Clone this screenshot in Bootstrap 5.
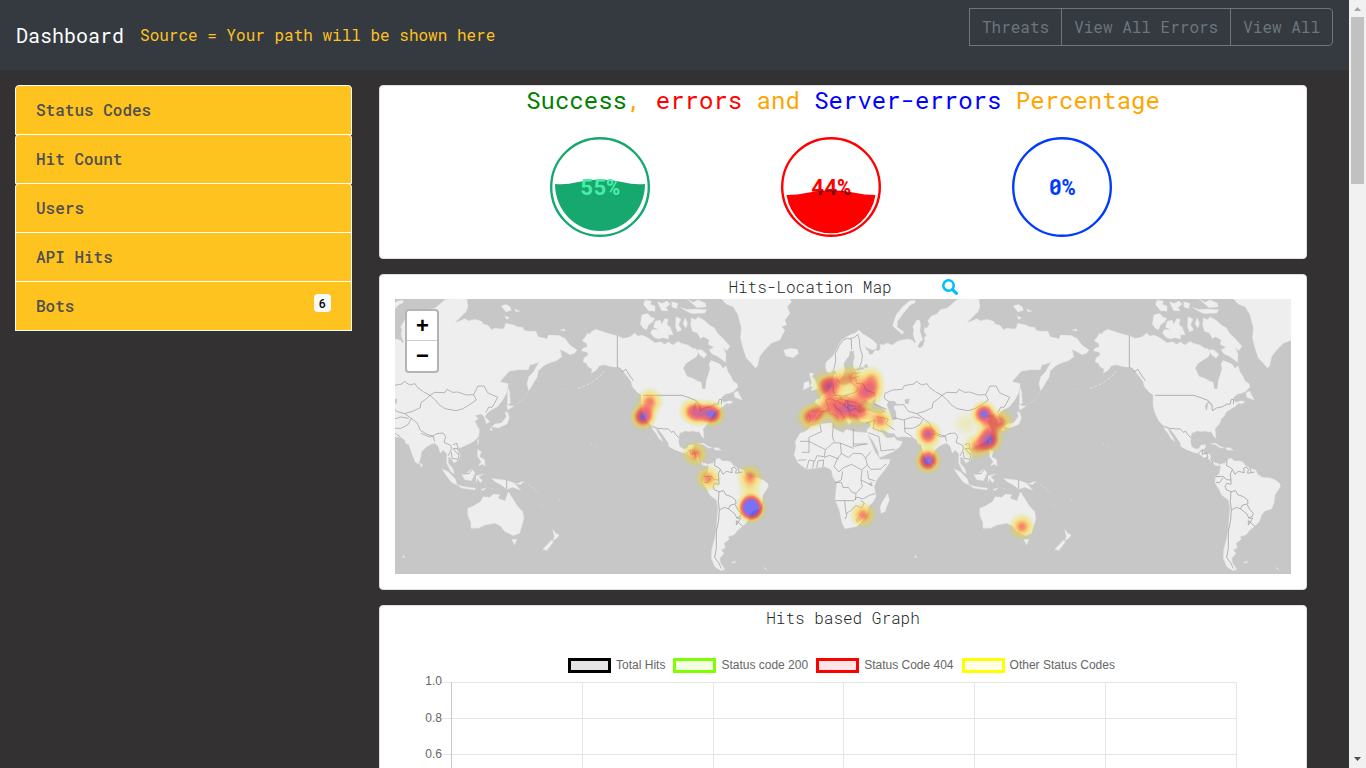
<!DOCTYPE html>
<html lang="en">
<head>
<meta charset="utf-8">
<meta name="viewport" content="width=device-width, initial-scale=1">
<title>Dashboard</title>
<link href="https://cdn.jsdelivr.net/npm/bootstrap@5.3.0/dist/css/bootstrap.min.css" rel="stylesheet">
<style>
body{height:768px;overflow:hidden;background:#343132;font-family:"Roboto Mono","Liberation Mono",monospace;color:#212529}
.topbar{height:70px;background:#343a40}
.navbar-brand{font-size:20px;line-height:30px}
.source{color:#ffc220;font-weight:450}
.topbar .btn{color:#6c757d;border-color:#6c757d;height:38px;line-height:24px;--bs-btn-border-radius:4px}
.topbar .btn:first-child{border-radius:0}
.sidebar{width:337px;margin-left:15px;margin-right:27px}
.sidebar .list-group-item{height:50px;margin-top:-1px;padding:12px 20px;background:#ffc31f;border:1px solid #fff;color:#4f4f4f;font-weight:500}
.sidebar .list-group-item:first-child{margin-top:0}
.sidebar .soft{border-radius:4px 4px 0 0}
.sidebar .badge{font-size:12px;line-height:12px;padding:3px 5px;height:18px;border-radius:4px;font-weight:500}
.main-col{width:928px;gap:15px}
.panel{border:1px solid #dfdfdf;border-radius:4px;background:#fff}
.panel-gauges{height:174px}.panel-map{height:316px}.panel-chart{height:400px}
.gauge-title{font-size:24px;line-height:29px;color:orange;margin:0;font-weight:380}
.gauges{padding:22px 0 0 115px}
.gauges>div{width:231px}
.gauges text{font-size:22px;font-weight:700}
.caption{font-size:16px;line-height:24px;font-weight:350}
.find{margin-left:50px}
.map-box{width:896px;height:275px;margin:0 15px}
.zoomer{left:10px;top:10px;width:34px;height:64px;border:2px solid #b4b4b4;border-radius:4px;background:#fff;overflow:hidden}
.zoomer span{height:29px;font:bold 22px/30px "Liberation Sans",sans-serif;color:#000;text-align:center;padding-left:1px}
.zoomer span+span{border-top:1px solid #ccc;height:31px}
.key{font:12px/14px "Liberation Sans",sans-serif;color:#666;gap:8px;margin-top:28px;height:15px;padding-right:3px}
.key i{width:43px;height:15px;border:3px solid;margin-right:5px}
.chart text{font:12px "Liberation Sans",sans-serif;fill:#666}
.scroller{width:17px;background:#f1f1f1}
.thumb{width:13px;height:167px;background:#c1c1c1}
</style>
</head>
<body class="d-flex">
<div class="flex-grow-1 d-flex flex-column overflow-hidden">
  <nav class="topbar navbar navbar-dark p-0 px-3 flex-shrink-0 align-items-start flex-nowrap">
    <div class="d-flex align-items-center h-100">
      <a class="navbar-brand p-0 text-white" href="#">Dashboard</a>
      <span class="source">Source = Your path will be shown here</span>
    </div>
    <div class="btn-group mt-2">
      <button class="btn btn-outline-secondary">Threats</button>
      <button class="btn btn-outline-secondary">View All Errors</button>
      <button class="btn btn-outline-secondary">View All</button>
    </div>
  </nav>
  <div class="d-flex align-items-start pt-3" style="margin-top:-1px">
    <div class="sidebar flex-shrink-0 list-group rounded-0">
      <a class="list-group-item soft">Status Codes</a>
      <a class="list-group-item soft">Hit Count</a>
      <a class="list-group-item soft">Users</a>
      <a class="list-group-item">API Hits</a>
      <a class="list-group-item d-flex justify-content-between">Bots <span class="badge text-bg-light">6</span></a>
    </div>
    <main class="main-col d-flex flex-column flex-shrink-0">
      <section class="panel panel-gauges">
        <h4 class="gauge-title text-center"><span style="color:green">Success</span>, <span style="color:red">errors</span> and <span style="color:blue">Server-errors</span> Percentage</h4>
        <div class="gauges d-flex">
          <div class="text-center"><svg class="d-block" style="margin-left:55px" width="100" height="100"><circle cx="50" cy="50" r="48.8" fill="none" stroke="#17a86f" stroke-width="2.4"/><path d="M5 47Q16 48 28 45Q50 40 72 45Q84 48 95 47A45 47 0 0 1 5 47Z" fill="#17a86f"/><text x="50" y="58" text-anchor="middle" fill="#49eda9">55%</text></svg></div>
          <div class="text-center"><svg class="d-block" style="margin-left:55px" width="100" height="100"><clipPath id="wet"><path d="M5.500 58Q16 58 28 55.500Q50 51 72 55.500Q84 58 94.500 58A45 45 0 0 1 5.500 58Z"/></clipPath><circle cx="50" cy="50" r="48.8" fill="none" stroke="red" stroke-width="2.4"/><text x="50" y="58" text-anchor="middle" fill="red">44%</text><g clip-path="url(#wet)"><path d="M0 0H100V100H0Z" fill="red"/><text x="50" y="58" text-anchor="middle" fill="#701515">44%</text></g></svg></div>
          <div class="text-center"><svg class="d-block" style="margin-left:55px" width="100" height="100"><circle cx="50" cy="50" r="48.8" fill="none" stroke="#003cff" stroke-width="2.4"/><text x="50" y="58" text-anchor="middle" fill="#003cff">0%</text></svg></div>
        </div>
      </section>
      <section class="panel panel-map">
        <div class="caption d-flex justify-content-center align-items-center"><span>Hits-Location Map</span><svg class="find" width="16" height="16" viewBox="0 0 16 16" fill="none" stroke="#00bfff"><circle cx="6.500" cy="6.500" r="5.2" stroke-width="2.6"/><path d="m10.600 10.600 3.800 3.800" stroke-width="3.100" stroke-linecap="round"/></svg></div>
        <div class="map-box position-relative">
          <svg class="d-block" width="896" height="275" viewBox="395 299 896 275">
            <defs>
              <g id="americas" transform="translate(595 295) scale(.33333)">
                <g fill="#eee" stroke="#e2e2e2" stroke-width="1">
                <path d="M67 122 39 115 19 108 2 103-11 110-16 117-23 115-29 125-39 138-26 145-23 155-36 160-41 168-23 172-21 180-33 188-36 200-26 205-21 215-9 222-11 235 4 225 14 212 29 210 49 215 67 217 85 230 100 248 108 260 112 275 125 290 138 300 138 330 142 350 155 378 170 392 174 405 185 418 191 430 203 441 199 430 188 412 182 400 192 405 210 430 220 445 222 455 240 465 262 473 275 475 290 488 305 492 315 503 325 511 337 514 336 507 331 505 319 502 312 490 309 478 291 475 287 465 294 460 297 449 281 450 277 460 267 462 254 455 251 440 252 425 254 415 271 408 282 410 294 408 303 411 312 410 321 425 327 430 326 412 324 402 339 385 344 370 351 365 359 350 372 342 384 335 394 325 405 327 414 320 404 317 387 322 382 319 379 308 392 297 404 295 417 289 429 276 427 266 414 258 409 245 399 230 394 212 384 220 375 207 359 200 348 196 342 208 345 220 341 235 334 255 331 282 321 281 319 262 307 258 294 250 276 244 265 220 272 207 285 197 304 186 309 175 303 161 294 160 279 150 259 145 249 139 234 150 220 141 209 148 197 140 179 143 169 135 154 125 139 120 129 123 119 114 105 125 94 128 84 130Z"/>
                <path d="M379 12 394 28 414 35 429 60 439 100 436 128 444 160 454 190 469 205 482 220 489 210 494 185 509 165 529 145 555 135 570 105 560 95 575 90 570 75 585 55 577 35 590 20 580 5H375Z"/>
                <path d="M140 60 158 55 169 67 180 70 172 82 160 90 155 105 145 100 136 88ZM181 78 196 75 200 88 210 70 220 74 216 88 226 97 235 120 220 119 222 132 203 128 192 132 178 128 166 115 171 104 190 103 175 97ZM243 65 258 72 251 90 260 104 248 111 241 95ZM270 68 278 84 273 100 264 87ZM289 68 301 74 309 65 328 76 343 90 358 98 368 115 386 132 405 154 396 167 385 160 393 176 392 203 380 193 364 182 352 178 342 165 356 157 339 148 343 136 325 125 316 131 307 114 292 109 287 90ZM145 28 151 15 170 18 166 28 181 34 180 49 160 47ZM187 20 202 25 215 18 226 27 213 38 220 48 200 47ZM230 20 249 25 245 41 231 36ZM256 37 275 43 302 42 335 44 331 54 291 56 275 49ZM276 12 296 22 308 14 331 24 334 36 306 38ZM304 164 320 164 336 178 327 190 315 181ZM417 293 429 288 434 301 443 316 419 307Z"/>
                <path d="M308 446 325 444 339 454 351 458 341 460 324 449ZM355 458 370 458 379 466 361 466ZM354 505 361 492 374 490 382 498 394 497 407 500 414 510 429 520 447 525 452 538 466 547 488 548 506 556 519 566 520 575 504 600 501 625 494 642 474 648 464 660 457 680 444 693 429 705 417 720 399 725 403 733 387 745 391 758 379 765 387 775 374 790 377 805 390 823 378 827 359 815 349 790 350 765 359 730 364 700 366 670 369 640 364 615 344 600 334 580 324 565 325 547 337 535 341 515 337 508ZM408 804 420 798 421 803ZM508 817 517 824 509 822Z"/>
                </g>
                <g fill="none" stroke="#999" stroke-width="2.2">
                <path d="M67 122V217L76 221 83 231 92 222 101 237 115 257M145 301H261L287 310 304 317 315 334 316 347 329 339 347 335 360 327 369 328 373 313 380 314 379 327M172 394 187 400 210 402 219 401 229 412 236 409 244 421 252 428M275 474 286 464 286 478 299 474 303 489 294 489M311 490 318 505M360 492 359 512 374 520 384 538 394 529 412 533 410 519 418 516 424 523 422 535 443 531M428 518 433 532M326 545 348 544 359 554 372 555 370 537 376 524M327 563 339 562 348 548M372 555 372 568 359 565 354 575 359 585 372 590 386 587 392 599 409 605 422 615 423 626 405 631 401 642 388 637 373 645 370 620 372 590M373 645 371 675 364 710 364 760 359 788 371 803 379 821M401 642 420 657 425 669 436 664 439 655 429 644 420 628M425 669 437 670 424 690 424 677M424 677 444 694"/>
                </g>
                <path d="M297 346 294 335 299 323 309 319 303 328 300 345ZM310 320 319 332 313 335Z" fill="#c7c7c7"/>
              </g>
              <g id="oldworld" transform="translate(780 270) scale(.33333)">
                <g fill="#eee" stroke="#e2e2e2" stroke-width="1">
                <path d="M90 461 84 445 88 427 113 428 121 420 119 408 104 396 112 386 119 388 126 376 140 368 150 355 160 347 158 330 162 314 170 310 168 326 172 334 178 343 195 345 214 338 216 320 220 312 228 319 233 312 225 304 238 300 254 297 246 290 225 298 220 290 220 276 224 260 221 243 210 243 207 257 198 270 191 280 194 300 190 318 179 329 172 325 169 307 161 300 150 309 141 306 137 295 137 278 149 266 160 257 168 239 177 223 186 209 199 201 213 193 225 190 237 180 246 190 263 200 279 211 291 223 289 237 278 240 260 233 254 227 259 239 266 244 267 253 277 253 285 241 295 242 301 237 300 223 312 224 320 219 336 225 354 213 370 209 385 207 398 211 403 219 407 216 403 207 399 192 402 179 398 170 410 150 419 150 422 166 420 180 424 197 429 209 420 216 413 229 420 235 430 226 434 211 433 202 440 198 432 184 434 172 441 174 448 162 443 153 453 139 471 131 482 118 500 115 516 102 530 89 542 87 555 80 596 80 600 110 594 125 561 158 575 153 590 146 603 152 621 148 641 154 646 162 660 166 671 179 681 174 701 177 708 175 713 159 724 162 736 164 749 170 763 172 771 182 791 184 803 183 811 200 837 206 841 195 872 196 891 205 906 225 927 240 920 250 905 254 891 245 876 239 882 260 866 272 846 278 831 285 811 302 808 320 793 345 782 363 777 341 782 320 796 306 813 276 806 280 786 285 781 300 753 299 724 304 696 335 721 341 716 370 701 395 688 410 670 420 656 431 651 440 666 455 655 461 649 442 640 432 621 437 631 445 621 455 635 480 632 500 616 515 596 525 583 531 566 537 577 555 573 568 558 580 550 566 541 560 541 580 554 595 560 612 549 605 536 580 536 551 526 540 517 550 511 530 501 520 493 521 476 530 461 545 456 570 450 583 441 575 431 550 423 525 413 520 410 510 398 502 370 500 352 502 341 490 327 490 312 480 300 476 310 492 319 503 335 503 343 500 350 510 368 515 360 530 340 545 305 560 298 562 295 545 280 515 262 490 260 480 270 470 272 454 250 457 238 452 232 436 220 431 208 436 207 445 216 455 206 463 197 446 184 424 168 409 166 398 158 404 166 416 182 427 188 440 180 455 175 440 155 425 145 412 135 420 121 425 118 432 108 445 104 456Z"/>
                <path d="M95 468 120 462 155 458 160 475 172 481 190 488 198 478 225 485 262 488 268 505 285 545 300 568 330 568 328 580 310 605 290 630 283 650 288 680 280 695 265 710 262 730 250 750 230 770 195 776 186 760 178 720 165 690 168 660 170 640 158 620 154 600 135 590 105 595 80 598 55 580 42 555 48 530 45 515 60 490 78 483ZM324 670 328 690 315 725 303 730 300 710 310 690ZM88 309 102 310 96 321 104 327 112 345 115 356 93 362 98 351 90 347 95 338ZM72 338 87 333 88 351 70 360ZM11 240 33 235 52 238 56 250 40 263 17 258ZM153 415 158 430 152 428ZM405 90 388 93 368 110 350 132 345 144 338 167 351 180 367 193 372 186 351 171 353 153 370 130 391 105 406 98ZM699 108 715 103 727 111 730 121 714 126ZM739 117 756 123 744 126ZM710 137 725 143 716 149ZM876 180 889 176 892 184Z"/>
                <path d="M718 345 725 365 727 400 718 404 719 377ZM716 405 738 409 719 420ZM671 470 681 462 701 458 715 440 711 425 720 428 724 445 717 462 691 474ZM669 471 674 482 666 479ZM628 511 633 507 630 524ZM521 596 541 605 562 627 568 646 550 637 532 613ZM567 645 596 651 623 655 620 660 582 655ZM581 612 596 609 611 596 621 608 611 632 590 629ZM624 617 648 612 632 621 643 631 637 639 628 625 624 640ZM628 538 640 545 635 560 650 569 652 589 644 583 631 588 640 575 629 560ZM671 625 691 628 716 631 741 640 758 661 734 652 717 658 700 645 681 635ZM745 641 768 633 758 644ZM453 576 464 586 460 592ZM599 715 616 708 637 695 646 680 666 682 676 672 696 674 690 685 711 693 721 665 731 680 746 705 764 725 768 745 755 790 736 797 711 785 697 768 681 760 651 765 631 775 609 775 608 757 599 735ZM731 808 747 808 740 825ZM853 778 864 790 874 795 866 805 855 812 859 800ZM851 810 856 816 836 842 824 838ZM406 855 411 863 404 862ZM638 658 655 654 645 662Z"/>
                <path fill="none" stroke="#ddd" stroke-width="2" d="M727 410 742 404 764 390 782 365" stroke-dasharray="6 6"/>
                <path fill="none" stroke="#d6d6d6" stroke-width="2" d="M846 340 885 358 929 356"  stroke-dasharray="4 9"/><path fill="none" stroke="#e2e2e2" stroke-width="3" d="M929 356 967 340 994 321 1007 305" stroke-dasharray="10 5"/>
                <path fill="none" stroke="#e0e0e0" stroke-width="2.500" d="M770 638 795 653 815 675M818 706 826 716M871 692 881 688M968 522 982 529 987 534M670 655 682 657" stroke-dasharray="5 7"/>
                </g>
                <g fill="#c7c7c7" stroke="#bbb" stroke-width=".8">
                <path d="M234 425 235 408 245 395 258 390 265 398 280 402 273 396 288 386 284 399 302 410 318 425 303 430 285 428 262 420 242 428ZM321 404 328 394 343 394 351 402 340 410 347 426 349 448 337 449 331 430Z"/>
                <path d="M375 389 387 386 386 400 376 401ZM265 643 276 635 276 648ZM250 291 260 281 263 293Z"/>
                </g>
                <g fill="none" stroke="#999" stroke-width="2">
                <path d="M161 300 167 273 166 250 177 228 190 210 202 205 214 208 215 239M210 206 224 202 233 193 238 208 240 234 247 255 245 275 238 292M227 319 229 340 250 342 258 360 285 370 283 380M160 347 160 365 167 376 189 378 209 373 230 364 234 351M120 425 145 423M145 410 137 390 153 386 169 394 184 386 198 392 225 397 240 405M88 430 91 457M198 392 193 407 211 421 229 415 236 426M282 402 320 418M178 375 185 391M203 390 205 425M167 385 203 380M193 407 185 400 172 395M211 421 208 436M205 405 232 410M214 338 230 350M217 325 238 318M217 310 240 308"/>
                <path d="M313 385 315 370 338 360 367 358 373 347 402 342 409 334 425 345 441 341 449 353 466 365 486 376 472 389 459 398 457 413 434 424 410 431 385 424 371 404 349 405M313 385 330 397M486 376 500 367 530 368 537 358 554 367 568 366 595 375 617 374 625 390 606 403 585 416 564 422 531 416 513 404 502 390 486 376M617 374 630 348 648 348 659 368 689 382 679 401 672 412 663 411 653 428M410 431 430 445 421 463 399 475 374 475M430 445 448 460 457 481 477 493 495 498 507 491 525 489 533 500 528 517 548 526 551 536 540 558M341 443 370 450 398 441 422 445M373 450 375 486 397 500M459 490 485 501 495 498 500 514M555 524 567 520 570 535 556 536 567 550 573 552 570 568 552 565 550 546M290 440 325 447 318 462 344 480M258 460 284 450 279 475 307 486M265 488 297 500 303 543 344 538M584 612 603 611 612 598M716 629V656"/>
                <path d="M220 476V530L258 521M220 522H264M120 463 124 485 87 502 87 547 65 547M60 514H87L136 539 160 518 181 519 220 535M136 539 133 560 111 557 103 575M160 465 157 500 163 515M181 519 184 550 172 567 162 590 177 606 190 593 215 583 245 600 262 585 257 565 272 545M184 550 205 563 220 550 246 551 257 565M262 585 272 598 302 597 318 582M246 601 243 630 247 650 228 670 215 666 205 652 189 653 184 637 166 638M165 692H222L231 681 249 687 268 676 285 671M166 638 184 630 188 604M194 692 198 731 212 722 228 707 246 713 253 699 242 691M228 670 226 690M243 630 278 647M262 601 266 627 285 632M132 563 148 556 176 567M98 595 102 573 87 570 80 597M79 569 54 571M110 593 114 573 131 570 129 591M193 744 197 746 201 730M228 749 235 744 240 750 232 756Z"/>
                </g>
              </g>
              <radialGradient id="spot"><stop offset="0" stop-color="#fff"/><stop offset=".2" stop-color="#fff" stop-opacity=".88"/><stop offset=".5" stop-color="#fff" stop-opacity=".52"/><stop offset=".8" stop-color="#fff" stop-opacity=".16"/><stop offset="1" stop-color="#fff" stop-opacity="0"/></radialGradient>
              <filter id="ramp" filterUnits="userSpaceOnUse" x="395" y="299" width="896" height="275" color-interpolation-filters="sRGB">
                <feColorMatrix values="0 0 0 1 0 0 0 0 1 0 0 0 0 1 0 0 0 0 1 0"/>
                <feComponentTransfer><feFuncR type="table" tableValues=".85 .9 1 1 1 1 .95 .8 .35 .1 0"/><feFuncG type="table" tableValues=".85 .85 .85 .72 .48 .2 .05 0 0 0 0"/><feFuncB type="table" tableValues="0 0 0 0 0 0 .08 .2 .65 1 1"/><feFuncA type="table" tableValues="0 .2 .37 .46 .53 .56 .57 .57 .55 .53 .52"/></feComponentTransfer>
              </filter>
            </defs>
            <path fill="#c7c7c7" d="M395 299h896v275H395z"/>
            <use href="#oldworld" x="-512"/><use href="#oldworld"/>
            <use href="#americas"/><use href="#americas" x="512"/>
            <g id="heat" filter="url(#ramp)"></g>
          </svg>
          <div class="zoomer position-absolute d-flex flex-column"><span>+</span><span>−</span></div>
        </div>
      </section>
      <section class="panel panel-chart">
        <div class="caption text-center">Hits based Graph</div>
        <div class="key d-flex justify-content-center">
          <span class="d-flex"><i style="border-color:#000;background:#e5e5e5"></i>Total Hits</span>
          <span class="d-flex"><i style="border-color:#7fff00;background:#f2ffe5"></i>Status code 200</span>
          <span class="d-flex"><i style="border-color:red;background:#ffe5e5"></i>Status Code 404</span>
          <span class="d-flex"><i style="border-color:#ff0;background:#ffffe5"></i>Other Status Codes</span>
        </div>
        <svg class="chart d-block" width="926" height="130" viewBox="380 673 926 130"><path d="M441 682.500H1237M441 718.500H1237M441 754.500H1237M582.500 682V803M713.500 682V803M843.500 682V803M974.500 682V803M1105.500 682V803M1236.500 682V803" stroke="#e5e5e5"/><path d="M451.500 682V803" stroke="#c8c8c8"/><g text-anchor="end"><text x="442" y="685">1.0</text><text x="442" y="722">0.8</text><text x="442" y="758">0.6</text></g></svg>
      </section>
    </main>
  </div>
</div>
<div class="scroller flex-shrink-0 d-flex flex-column align-items-center">
  <svg width="17" height="17"><path d="M5 11h7L8.500 7z" fill="#a3a3a3"/></svg>
  <div class="thumb"></div>
  <svg class="mt-auto" width="17" height="17"><path d="M5 6h7l-3.500 4z" fill="#505050"/></svg>
</div>
<script src="https://cdn.jsdelivr.net/npm/bootstrap@5.3.0/dist/js/bootstrap.bundle.min.js"></script>
<script>
// x, y and intensity of each traffic source
const hits=[[650,401,.5],[647,410,.3],[643,417,.85],[692,411,.55],[698,414,.5],[704,412,.4],[712,414,.88],[695,454,.5],[708,478.500,.5],[750,477,.5],[750,490,.2],[750,505,.85],[753,506,.6],[750,510,.8],[753,510,.6],[828,387,.65],[835,383,.4],[823,382,.2],[842,378,.2],[852,378,.45],[871,379,.42],[873,386,.3],[862,388,.3],[864,393,.4],[871,393,.4],[829,399,.3],[843,396,.2],[858,399,.25],[812,416,.5],[808,418,.25],[821,411,.45],[833,404,.4],[839,411,.5],[840,418,.3],[848,406,.6],[853,410,.45],[862,411,.45],[857,417,.2],[881,421,.45],[875,417,.2],[928,434,.78],[928,447,.12],[928,460.700,.94],[863,515,.53],[984,414,.93],[990,440,.75],[983,444,.5],[988,433,.4],[993,424,.4],[1001,421.700,.44],[975,447,.35],[966,424,.12],[1022,526.700,.53]];
document.getElementById('heat').innerHTML=hits.map(([x,y,v])=>`<circle cx="${x}" cy="${y}" r="14" fill="url(#spot)" opacity="${v}"/>`).join('');
</script>
</body>
</html>
